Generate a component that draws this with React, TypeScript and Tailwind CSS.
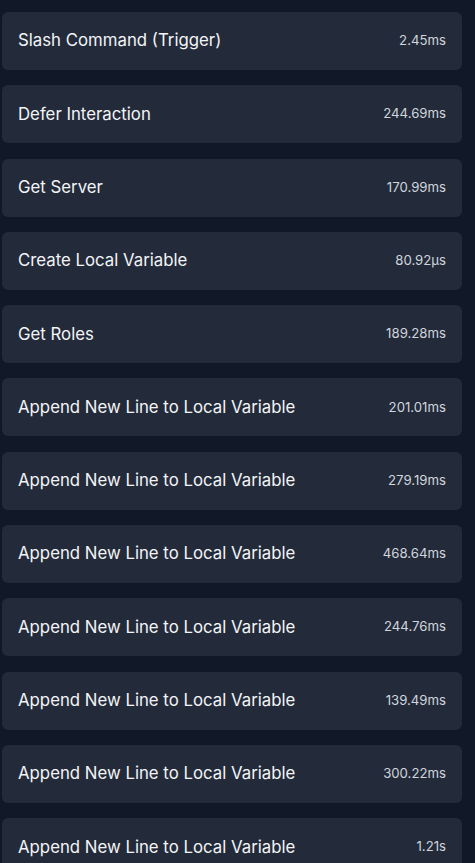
const steps: { name: string; time: string }[] = [
  { name: 'Slash Command (Trigger)', time: '2.45ms' },
  { name: 'Defer Interaction', time: '244.69ms' },
  { name: 'Get Server', time: '170.99ms' },
  { name: 'Create Local Variable', time: '80.92µs' },
  { name: 'Get Roles', time: '189.28ms' },
  { name: 'Append New Line to Local Variable', time: '201.01ms' },
  { name: 'Append New Line to Local Variable', time: '279.19ms' },
  { name: 'Append New Line to Local Variable', time: '468.64ms' },
  { name: 'Append New Line to Local Variable', time: '244.76ms' },
  { name: 'Append New Line to Local Variable', time: '139.49ms' },
  { name: 'Append New Line to Local Variable', time: '300.22ms' },
  { name: 'Append New Line to Local Variable', time: '1.21s' },
];

export default function App() {
  return (
    <div className="min-h-screen h-[863px] overflow-hidden bg-[#111827] pt-3 pl-[2px] pr-[13px] font-['Inter',sans-serif]">
      <ul className="flex flex-col gap-[15.3px]">
        {steps.map((s, i) => (
          <li
            key={i}
            className="flex h-[58px] items-center justify-between rounded-md bg-[#232b3b] px-4"
          >
            <span className="text-[16.8px] text-gray-100">{s.name}</span>
            <span className="text-[13.2px] text-gray-300">{s.time}</span>
          </li>
        ))}
      </ul>
    </div>
  );
}
